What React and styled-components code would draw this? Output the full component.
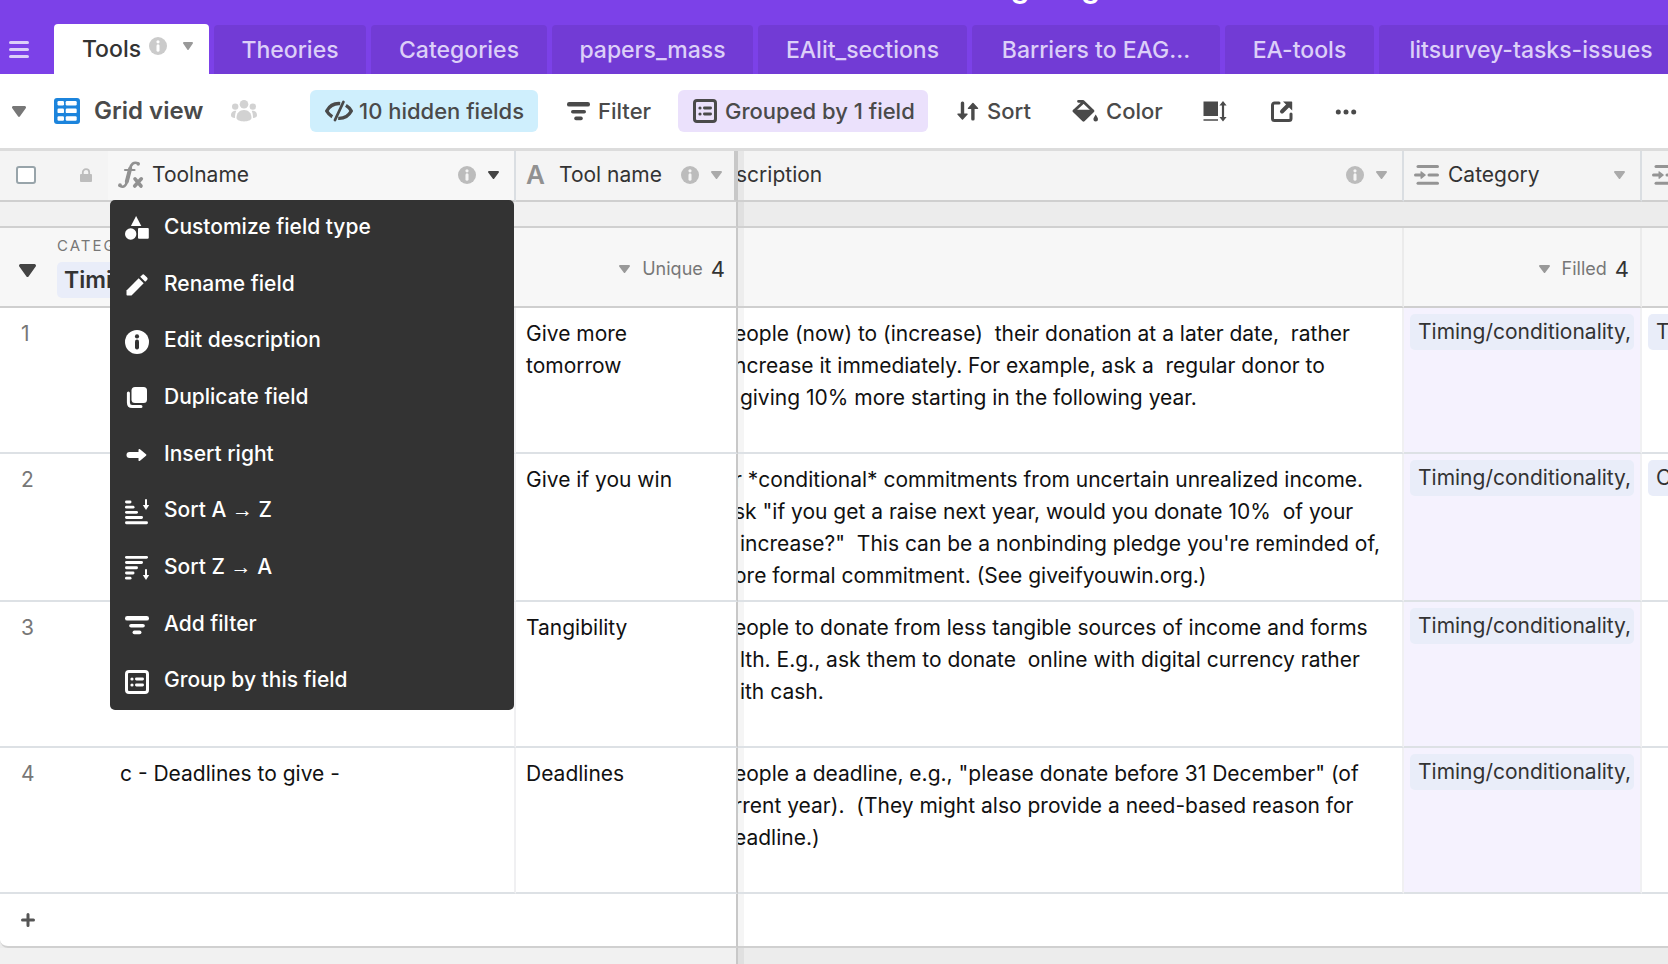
import React from "react";
import styled, { createGlobalStyle } from "styled-components";

const GlobalStyle = createGlobalStyle`
  *, *::before, *::after { box-sizing: border-box; }
  body {
    margin: 0;
    overflow: hidden;
    background: #ececec;
    color: #111;
    font-family: Inter, "Liberation Sans", sans-serif;
    font-size: 21px;
    line-height: 32px;
  }
  button {
    margin: 0;
    padding: 0;
    border: 0;
    background: none;
    color: inherit;
    font: inherit;
    cursor: pointer;
  }
`;

/* ---------- icons ---------- */

const Icon = styled.svg`
  display: block;
  flex: none;
  overflow: visible;
`;

const Caret = ({ w = 11, h = 8, color = "#aaa" }) => (
  <Icon width={w} height={h} viewBox="0 0 11 8" fill={color} preserveAspectRatio="none" aria-hidden="true">
    <path d="M1 0h9a1 1 0 0 1 .8 1.6L6.3 7.5a1 1 0 0 1-1.6 0L.2 1.6A1 1 0 0 1 1 0z" />
  </Icon>
);

const InfoIcon = ({ size = 18, color = "#bcbcbc", mark = "#f5f5f5" }) => (
  <Icon width={size} height={size} viewBox="0 0 24 24" aria-hidden="true">
    <circle cx="12" cy="12" r="12" fill={color} />
    <circle cx="12" cy="6.4" r="2.1" fill={mark} />
    <rect x="10" y="9.6" width="4" height="10" rx="2" fill={mark} />
  </Icon>
);

const HamburgerIcon = () => (
  <Icon width="20" height="17" viewBox="0 0 20 17" fill="#dccff9" aria-hidden="true">
    <rect width="20" height="3" rx="1.5" />
    <rect y="7" width="20" height="3" rx="1.5" />
    <rect y="14" width="20" height="3" rx="1.5" />
  </Icon>
);

const GridIcon = () => (
  <Icon width="26" height="26" viewBox="0 0 26 26" aria-hidden="true">
    <rect width="26" height="26" rx="3" fill="#1c84dc" />
    <g fill="#fff">
      <rect x="3.5" y="3" width="6.5" height="4.5" rx="1.2" />
      <rect x="11.7" y="3" width="11" height="4.5" rx="1.2" />
      <rect x="3.5" y="10.6" width="6.5" height="4.5" rx="1.2" />
      <rect x="11.7" y="10.6" width="11" height="4.5" rx="1.2" />
      <rect x="3.5" y="18.2" width="6.5" height="4.5" rx="1.2" />
      <rect x="11.7" y="18.2" width="11" height="4.5" rx="1.2" />
    </g>
  </Icon>
);

const PeopleIcon = () => (
  <Icon width="26" height="22" viewBox="0 0 26 22" fill="#d2d2d2" aria-hidden="true">
    <circle cx="13" cy="4.3" r="4.3" />
    <circle cx="4.2" cy="6.6" r="3.2" />
    <circle cx="21.8" cy="6.6" r="3.2" />
    <path d="M5.5 18c0-5 3-8 7.500-8s7.500 3 7.500 8c0 2-3.500 3.400-7.500 3.400S5.500 20 5.500 18z" />
    <path d="M0 15.500c0-3 1.500-4.700 5.300-4.700C4.500 12.500 4 15 4 18c-2.500-.2-4-1.100-4-2.500zM26 15.500c0-3-1.500-4.700-5.300-4.700.8 1.700 1.300 4.200 1.300 7.200 2.500-.2 4-1.100 4-2.500z" />
  </Icon>
);

const HiddenIcon = () => (
  <Icon width="28" height="20" viewBox="0 0 28 20" fill="none" stroke="#4a4a4a" strokeWidth="3.400" strokeLinejoin="round" aria-hidden="true">
    <path d="M15.200 2.600C9 2.200 4.200 5.400 1.700 10c1.300 2.300 3.100 4.300 5.600 5.700" />
    <path d="M13.200 17.400C19.300 17.700 23.800 14.600 26.300 10c-1.200-2.300-3-4.200-5.400-5.600" />
    <path d="M18.400 1 10 19" strokeWidth="2.800" strokeLinecap="round" />
  </Icon>
);

const FilterIcon = ({ w = 23, color = "#4a4a4a" }) => (
  <Icon width={w} height="19" viewBox="0 0 23 19" fill={color} preserveAspectRatio="none" aria-hidden="true">
    <rect width="23" height="4.600" rx="2.200" />
    <rect x="4" y="8" width="15" height="3.600" rx="1.800" />
    <rect x="7.200" y="14.600" width="8.600" height="3.600" rx="1.800" />
  </Icon>
);

const GroupIcon = ({ color = "#4a4a4a" }) => (
  <Icon width="24" height="24" viewBox="0 0 24 24" fill={color} aria-hidden="true">
    <rect x="1.500" y="1.500" width="21" height="21" rx="2.500" fill="none" stroke={color} strokeWidth="3" />
    <circle cx="7" cy="9" r="1.600" />
    <circle cx="7" cy="15" r="1.600" />
    <rect x="10" y="7.600" width="9" height="2.800" rx="1.400" />
    <rect x="10" y="13.600" width="9" height="2.800" rx="1.400" />
  </Icon>
);

const SortIcon = () => (
  <Icon width="22" height="20" viewBox="0 0 22 20" fill="#4a4a4a" aria-hidden="true">
    <rect x="3.800" y="0.500" width="3.400" height="15" rx="1.500" />
    <path d="M.8 12.500h9.400a.6.6 0 0 1 .4 1l-4.600 5a.8.800 0 0 1-1.100 0L.4 13.500a.6.6 0 0 1 .4-1z" />
    <rect x="14.200" y="4" width="3.400" height="15.500" rx="1.500" />
    <path d="M11.300 8h9.400a.6.6 0 0 0 .4-1l-4.600-5a.8.800 0 0 0-1.100 0l-4.500 5a.6.6 0 0 0 .4 1z" />
  </Icon>
);

const ColorIcon = () => (
  <Icon width="26" height="22" viewBox="0 0 26 22" aria-hidden="true">
    <path d="M6.500 1.300h4.400L21 11 11.500 20.200 1.900 11 10.500 3" fill="none" stroke="#4a4a4a" strokeWidth="2.800" strokeLinejoin="round" strokeLinecap="round" />
    <path d="M1.500 9.800h20L12.300 20.500a1 1 0 0 1-1.500 0z" fill="#4a4a4a" />
    <path d="M23.700 14.500c1.300 2.200 2.300 3.500 2.300 4.800a2.300 2.300 0 0 1-4.600 0c0-1.300 1-2.600 2.300-4.800z" fill="#4a4a4a" />
  </Icon>
);

const RowHeightIcon = () => (
  <Icon width="24" height="21" viewBox="0 0 24 21" aria-hidden="true">
    <rect x="0.500" y="0.500" width="14.500" height="14.500" fill="#4a4a4a" />
    <rect x="0.500" y="18" width="14.500" height="2" fill="#777" />
    <path d="M20 3v14" stroke="#4a4a4a" strokeWidth="2.200" />
    <path d="M20 0l3.600 4.600h-7.200zM20 20.500l3.600-4.600h-7.200z" fill="#4a4a4a" />
  </Icon>
);

const ShareIcon = () => (
  <Icon width="22" height="21" viewBox="0 0 22 21" aria-hidden="true">
    <path d="M8 2H3.500A2 2 0 0 0 1.500 4v13.500a2 2 0 0 0 2 2h14.500a2 2 0 0 0 2-2V13" fill="none" stroke="#4a4a4a" strokeWidth="3" strokeLinecap="round" />
    <path d="M11 10.500l6-6" stroke="#4a4a4a" strokeWidth="4" strokeLinecap="round" />
    <path d="M12 .5h8.500a.7.700 0 0 1 .7.700V9.500z" fill="#4a4a4a" />
  </Icon>
);

const DotsIcon = () => (
  <Icon width="22" height="6" viewBox="0 0 22 6" fill="#4a4a4a" aria-hidden="true">
    <circle cx="3.300" cy="4" r="2.500" />
    <circle cx="11" cy="4" r="2.500" />
    <circle cx="18.700" cy="4" r="2.500" />
  </Icon>
);

const LockIcon = () => (
  <Icon width="12" height="14" viewBox="0 0 12 14" aria-hidden="true">
    <rect y="6" width="12" height="8" rx="1" fill="#bdbdbd" />
    <path d="M2.800 6.500V4.300a3.200 3.200 0 0 1 6.400 0v2.200" fill="none" stroke="#bdbdbd" strokeWidth="1.800" />
  </Icon>
);

const FormulaIcon = () => (
  <Icon width="25" height="28" viewBox="0 0 25 28" fill="none" stroke="#919191" strokeLinecap="round" aria-hidden="true">
    <path d="M2 24.800c3.800 2.400 6-.3 7-4.300l3-12.500C13 3 15.500.6 20.400 2.400" strokeWidth="2.600" />
    <path d="M8.800 20.500l3.400-13" strokeWidth="4" />
    <circle cx="20.200" cy="3" r="1.700" fill="#919191" stroke="none" />
    <circle cx="2" cy="24.200" r="1.900" fill="#919191" stroke="none" />
    <path d="M7 9h9.500" strokeWidth="2.200" />
    <path d="M17 17.800l6 7.200M23.300 17.800l-6.600 7.200" strokeWidth="3.600" />
  </Icon>
);

const LookupIcon = () => (
  <Icon width="25" height="20" viewBox="0 0 25 20" fill="#949494" aria-hidden="true">
    <rect x="2.500" y="0" width="22.500" height="3" rx="1.500" />
    <rect x="2.500" y="16.800" width="22.500" height="3" rx="1.500" />
    <rect x="0" y="8.600" width="8" height="3" rx="1.500" />
    <path d="M6.500 6.600c.3-.4.700-.4 1-.2l4 3.200c.3.300.3.700 0 1l-4 3.200c-.3.200-.7.200-1-.2z" />
    <rect x="13.500" y="8.600" width="11.500" height="3" rx="1.500" />
  </Icon>
);

const ShapesIcon = () => (
  <Icon width="24" height="24" viewBox="0 0 24 24" fill="#fff" aria-hidden="true">
    <path d="M11.100 0 16.300 10H5.900z" />
    <circle cx="5.700" cy="18" r="5.700" />
    <rect x="13" y="12" width="10.800" height="10.800" rx="1" />
  </Icon>
);

const PencilIcon = () => (
  <Icon width="24" height="24" viewBox="0 0 24 24" fill="#fff" aria-hidden="true">
    <path d="M1.500 17.500 13.700 5.300l5 5L6.500 22.500H2.300a.8.800 0 0 1-.8-.8z" />
    <path d="M15.200 3.800l1.900-1.900a1.600 1.600 0 0 1 2.300 0l2.700 2.700a1.600 1.600 0 0 1 0 2.300l-1.900 1.900z" />
  </Icon>
);

const DuplicateIcon = () => (
  <Icon width="24" height="24" viewBox="0 0 24 24" fill="#fff" aria-hidden="true">
    <rect x="6.500" y="1" width="15.500" height="16" rx="3.500" />
    <path d="M3.400 7v9.500c0 2.300 1.200 4 3.800 4H16" fill="none" stroke="#fff" strokeWidth="3" strokeLinecap="round" />
  </Icon>
);

const ArrowIcon = () => (
  <Icon width="24" height="24" viewBox="0 0 24 24" fill="#fff" aria-hidden="true">
    <rect x="1.500" y="9" width="15" height="6" rx="3" />
    <path d="M13.500 6.800c0-.8.900-1.200 1.500-.6l6 5.100c.5.400.5 1 0 1.400l-6 5.100c-.6.600-1.500.2-1.500-.6z" />
  </Icon>
);

const SortAscIcon = ({ flip }) => (
  <Icon width="24" height="24" viewBox="0 0 24 24" fill="#fff" aria-hidden="true">
    {[6.500, 9.500, 13, 18, 23].map((w, i) => (
      <rect key={w} x="0" y={flip ? 20.700 - i * 5.200 : 0.500 + i * 5.200} width={w} height="2.900" rx="1.450" />
    ))}
    <g transform={flip ? "translate(0 14)" : undefined}>
      <rect x="20" y="-1" width="2" height="8" rx="1" />
      <path d="M17.800 5h6.400l-3.200 5z" />
    </g>
  </Icon>
);

/* ---------- layout ---------- */

const Page = styled.div`
  display: flex;
  flex-direction: column;
  min-height: 100vh;
  overflow: hidden;
`;

const TopBar = styled.header`
  background: #7c41e8;
`;

const BaseTitleClip = styled.div`
  display: flex;
  align-items: flex-end;
  height: 24px;
  overflow: hidden;
  padding-left: 60%;
`;

const BaseTitle = styled.h1`
  margin: 0;
  padding: 0 0 18px 10px;
  color: #fff;
  font-size: 30px;
  font-weight: 600;
  line-height: 40px;
`;

const TabBar = styled.nav`
  display: flex;
  align-items: flex-end;
  gap: 5px;
  height: 50px;
`;

const MenuToggle = styled.button`
  display: flex;
  align-items: center;
  flex: none;
  width: 49px;
  height: 50px;
  padding-left: 9px;
`;

const Tab = styled.button`
  display: flex;
  align-items: center;
  justify-content: center;
  flex: none;
  width: ${(p) => p.$width}px;
  height: ${(p) => (p.$active ? 50 : 49)}px;
  padding-left: ${(p) => (p.$active ? 12 : 0)}px;
  border-radius: 4px 4px 0 0;
  background: ${(p) => (p.$active ? "#fff" : "#723bd5")};
  color: ${(p) => (p.$active ? "#333" : "#dccff8")};
  font-size: 23px;
  font-weight: 500;
  white-space: nowrap;
`;

const TabBadges = styled.span`
  display: flex;
  align-items: center;
  gap: 16px;
  margin-left: 8px;
  padding-bottom: 6px;
`;

const Toolbar = styled.div`
  display: flex;
  align-items: center;
  height: 77px;
  padding: 0 12px;
  border-bottom: 3px solid #dcdcdc;
  background: #fff;
  color: #4a4a4a;
  font-size: 22px;
  font-weight: 500;
  white-space: nowrap;
`;

const ViewPicker = styled.button`
  display: flex;
  align-items: center;
  flex: none;
  gap: 14px;
  width: 298px;
  font-size: 24px;
  font-weight: 600;
`;

const CaretBox = styled.span`
  width: 28px;
`;

const Collaborators = styled.span`
  margin-left: 14px;
`;

const ToolButton = styled.button`
  display: flex;
  align-items: center;
  flex: none;
  gap: ${(p) => p.$gap || 8}px;
  width: ${(p) => p.$width}px;
  height: 42px;
  margin-right: ${(p) => p.$after || 0}px;
  padding-left: ${(p) => (p.$fill ? 15 : 0)}px;
  border-radius: 6px;
  background: ${(p) => p.$fill || "transparent"};
`;

const GridArea = styled.main`
  display: flex;
  flex-direction: column;
  flex: 1;
  overflow: hidden;
`;

const Table = styled.table`
  width: calc(100% + 212px);
  border-collapse: separate;
  border-spacing: 0;
  table-layout: fixed;
`;

const Col = styled.col`
  width: ${(p) => (p.$width ? `${p.$width}px` : "auto")};
`;

const HeadCell = styled.th`
  position: relative;
  padding: 0;
  border-right: ${(p) => (p.$frozen ? "4px solid #c8c8c8" : p.$open ? "0" : "2px solid #dadee2")};
  border-bottom: 2px solid #cfcfcf;
  background: ${(p) => (p.$primary ? "#f7f7f7" : "#f4f4f4")};
  box-shadow: ${(p) => (p.$shade ? "inset 6px 0 0 rgba(0, 0, 0, 0.05)" : "none")};
  color: #333;
  font-weight: 400;
  text-align: left;
`;

const HeadContent = styled.div`
  display: flex;
  align-items: center;
  gap: 9px;
  height: 49px;
  padding: 0 ${(p) => (p.$frozen ? 12 : 15)}px 2px ${(p) => (p.$left === undefined ? 10 : p.$left)}px;
  overflow: hidden;
  white-space: nowrap;
`;

const HeadActions = styled.span`
  display: flex;
  align-items: center;
  gap: 12px;
  margin-left: auto;
`;

const TextTypeMark = styled.span`
  width: 24px;
  color: #919191;
  font-size: 26px;
  font-weight: 600;
`;

const Checkbox = styled.input`
  appearance: none;
  flex: none;
  width: 20px;
  height: 18px;
  margin: 0 35px 0 0;
  border: 2px solid #98a4aa;
  border-radius: 3px;
  background: #fff;
`;

const Menu = styled.ul`
  position: absolute;
  z-index: 2;
  top: 100%;
  right: 0;
  left: 2px;
  display: flex;
  flex-direction: column;
  height: 510px;
  margin: 0;
  padding: 0;
  border-radius: 5px;
  background: #333;
  color: #fff;
  font-weight: 500;
  list-style: none;
`;

const MenuItem = styled.li`
  display: flex;
  flex: 1;
`;

const MenuButton = styled.button`
  display: flex;
  align-items: center;
  flex: 1;
  gap: 15px;
  padding: 0 15px 3px;
  text-align: left;

  svg {
    margin-top: 3px;
  }
`;

const LongArrow = styled.span`
  font-family: "Liberation Sans", sans-serif;
`;

const SpacerCell = styled.td`
  height: 26px;
  padding: 0;
  border-right: ${(p) => (p.$frozen ? "2px solid #c8c8c8" : "0")};
  border-bottom: 2px solid #d0d0d0;
  background: ${(p) => (p.$scrolled ? "#ececec" : "#f1f1f1")};
  box-shadow: ${(p) => (p.$scrolled ? "inset 6px 0 0 rgba(0, 0, 0, 0.05)" : "none")};
`;

const GroupCell = styled.td`
  height: 80px;
  padding: 0 11px 0 0;
  border-right: ${(p) => (p.$frozen ? "2px solid #c8c8c8" : p.$open ? "0" : "2px solid #ebebeb")};
  border-bottom: 2px solid #cfcfcf;
  background: #f7f7f7;
  box-shadow: ${(p) => (p.$shade ? "inset 6px 0 0 rgba(0, 0, 0, 0.04)" : "none")};
  white-space: nowrap;
`;

const GroupHead = styled.div`
  display: flex;
  align-items: center;
  gap: 21px;
  padding-left: 19px;

  svg {
    margin-top: 6px;
  }
`;

const GroupLabel = styled.div`
  color: #777;
  font-size: 15px;
  letter-spacing: 2px;
  line-height: 20px;
`;

const GroupValue = styled.div`
  width: 300px;
  height: 36px;
  margin-top: 6px;
  padding: 0 7px;
  border-radius: 5px;
  background: #e9edf9;
  color: #333;
  font-size: 23px;
  font-weight: 600;
  line-height: 36px;
`;

const Summary = styled.button`
  display: flex;
  align-items: center;
  gap: 8px;
  margin-left: auto;
  padding-top: 4px;
  color: #333;
  font-size: 22px;

  svg {
    margin-right: 4px;
  }
`;

const SummaryLabel = styled.span`
  color: #777;
  font-size: 18px;
`;

const DataRow = styled.tr`
  height: 146px;
`;

const Cell = styled.td`
  padding: ${(p) => (p.$chip ? "6px" : "10px 10px 8px")};
  padding-left: ${(p) => (p.$shade ? 0 : p.$chip ? 6 : p.$number ? 21 : p.$primary ? 12 : 10)}px;
  border-right: ${(p) => (p.$frozen ? "2px solid #c8c8c8" : p.$number ? "0" : "2px solid #f0f0f2")};
  border-bottom: 2px solid #dde1e5;
  background: ${(p) => (p.$tint ? "#f5f2fe" : "#fff")};
  box-shadow: ${(p) => (p.$shade ? "inset 6px 0 0 rgba(0, 0, 0, 0.04)" : "none")};
  color: ${(p) => (p.$number ? "#777" : "#111")};
  overflow: hidden;
  vertical-align: top;
`;

const ScrolledLine = styled.div`
  margin-left: -4px;
  white-space: pre;
`;

const ScrolledTitle = styled.span`
  margin-left: -2px;
  white-space: pre;
`;

const Chip = styled.div`
  height: 36px;
  padding-left: 8px;
  border-radius: 5px;
  background: #e9edf9;
  color: #333;
  line-height: 36px;
  overflow: hidden;
  white-space: nowrap;
`;

const AddCell = styled.td`
  height: 54px;
  padding: 0 0 0 21px;
  border-right: ${(p) => (p.$frozen ? "2px solid #c8c8c8" : "0")};
  border-bottom: 2px solid #d0d0d0;
  border-bottom-left-radius: ${(p) => (p.$corner ? 8 : 0)}px;
  background: #fff;
  box-shadow: ${(p) => (p.$shade ? "inset 6px 0 0 rgba(0, 0, 0, 0.04)" : "none")};
`;

const AddRow = styled.tr`
  background: #f1f1f1;
`;

const Below = styled.div`
  display: flex;
  flex: 1;
`;

const BelowFrozen = styled.div`
  width: 738px;
  border-right: 2px solid #c8c8c8;
  background: #f1f1f1;
`;

const BelowRest = styled.div`
  flex: 1;
  background: #ececec;
  box-shadow: inset 6px 0 0 rgba(0, 0, 0, 0.05);
`;

/* ---------- data ---------- */

const tabs = [
  { name: "Theories", width: 152 },
  { name: "Categories", width: 176 },
  { name: "papers_mass", width: 201 },
  { name: "EAlit_sections", width: 209 },
  { name: "Barriers to EAG...", width: 248 },
  { name: "EA-tools", width: 149 },
  { name: "litsurvey-tasks-issues", width: 304 },
];

const menuItems = [
  { id: "type", label: "Customize field type", icon: <ShapesIcon /> },
  { id: "rename", label: "Rename field", icon: <PencilIcon /> },
  { id: "describe", label: "Edit description", icon: <InfoIcon size={24} color="#fff" mark="#333" /> },
  { id: "duplicate", label: "Duplicate field", icon: <DuplicateIcon /> },
  { id: "insert", label: "Insert right", icon: <ArrowIcon /> },
  { id: "asc", label: <span>Sort A <LongArrow>→</LongArrow> Z</span>, icon: <SortAscIcon /> },
  { id: "desc", label: <span>Sort Z <LongArrow>→</LongArrow> A</span>, icon: <SortAscIcon flip /> },
  { id: "filter", label: "Add filter", icon: <FilterIcon w={24} color="#fff" /> },
  { id: "group", label: "Group by this field", icon: <GroupIcon color="#fff" /> },
];

const rows = [
  {
    primary: "",
    name: "Give more tomorrow",
    lines: [
      "eople (now) to (increase)  their donation at a later date,  rather",
      "ncrease it immediately. For example, ask a  regular donor to",
      " giving 10% more starting in the following year.",
    ],
    next: "T",
  },
  {
    primary: "",
    name: "Give if you win",
    lines: [
      "r *conditional* commitments from uncertain unrealized income.",
      "sk \"if you get a raise next year, would you donate 10%  of your",
      " increase?\"  This can be a nonbinding pledge you're reminded of,",
      "ore formal commitment. (See giveifyouwin.org.)",
    ],
    next: "C",
  },
  {
    primary: "",
    name: "Tangibility",
    lines: [
      "eople to donate from less tangible sources of income and forms",
      " lth. E.g., ask them to donate  online with digital currency rather",
      " ith cash.",
    ],
  },
  {
    primary: "c - Deadlines to give -",
    name: "Deadlines",
    lines: [
      "eople a deadline, e.g., \"please donate before 31 December\" (of",
      "rrent year).  (They might also provide a need-based reason for",
      "eadline.)",
    ],
  },
];

export default function App() {
  return (
    <Page>
      <GlobalStyle />
      <TopBar>
        <BaseTitleClip>
          <BaseTitle>giving</BaseTitle>
        </BaseTitleClip>
        <TabBar>
          <MenuToggle aria-label="All tables">
            <HamburgerIcon />
          </MenuToggle>
          <Tab $width={155} $active>
            Tools
            <TabBadges>
              <InfoIcon color="#cbcbcb" mark="#fff" />
              <Caret w={10} h={8} color="#999" />
            </TabBadges>
          </Tab>
          {tabs.map((t) => (
            <Tab key={t.name} $width={t.width}>
              {t.name}
            </Tab>
          ))}
        </TabBar>
      </TopBar>

      <Toolbar>
        <ViewPicker>
          <CaretBox>
            <Caret w={14} h={11} color="#777" />
          </CaretBox>
          <GridIcon />
          Grid view
          <Collaborators>
            <PeopleIcon />
          </Collaborators>
        </ViewPicker>
        <ToolButton $width={228} $after={29} $fill="#cfeffd" $gap={6}>
          <HiddenIcon />
          10 hidden fields
        </ToolButton>
        <ToolButton $width={86} $after={25}>
          <FilterIcon />
          Filter
        </ToolButton>
        <ToolButton $width={250} $after={29} $fill="#ebe1fc">
          <GroupIcon />
          Grouped by 1 field
        </ToolButton>
        <ToolButton $width={76} $after={39}>
          <SortIcon />
          Sort
        </ToolButton>
        <ToolButton $width={92} $after={39}>
          <ColorIcon />
          Color
        </ToolButton>
        <ToolButton $width={24} $after={44} aria-label="Row height">
          <RowHeightIcon />
        </ToolButton>
        <ToolButton $width={22} $after={42} aria-label="Share view">
          <ShareIcon />
        </ToolButton>
        <ToolButton $width={22} aria-label="More">
          <DotsIcon />
        </ToolButton>
      </Toolbar>

      <GridArea>
        <Table>
          <colgroup>
            <Col $width={108} />
            <Col $width={408} />
            <Col $width={222} />
            <Col />
            <Col $width={238} />
            <Col $width={238} />
          </colgroup>
          <thead>
            <tr>
              <HeadCell $open>
                <HeadContent $left={16}>
                  <Checkbox type="checkbox" aria-label="Select all records" />
                  <LockIcon />
                </HeadContent>
              </HeadCell>
              <HeadCell $primary>
                <HeadContent>
                  <FormulaIcon />
                  Toolname
                  <HeadActions>
                    <InfoIcon />
                    <Caret color="#444" />
                  </HeadActions>
                </HeadContent>
                <Menu>
                  {menuItems.map((m) => (
                    <MenuItem key={m.id}>
                      <MenuButton>
                        {m.icon}
                        {m.label}
                      </MenuButton>
                    </MenuItem>
                  ))}
                </Menu>
              </HeadCell>
              <HeadCell $frozen>
                <HeadContent $frozen>
                  <TextTypeMark aria-hidden="true">A</TextTypeMark>
                  Tool name
                  <HeadActions>
                    <InfoIcon />
                    <Caret />
                  </HeadActions>
                </HeadContent>
              </HeadCell>
              <HeadCell $shade>
                <HeadContent $left={0}>
                  <ScrolledTitle>scription</ScrolledTitle>
                  <HeadActions>
                    <InfoIcon />
                    <Caret />
                  </HeadActions>
                </HeadContent>
              </HeadCell>
              <HeadCell>
                <HeadContent>
                  <LookupIcon />
                  Category
                  <HeadActions>
                    <Caret />
                  </HeadActions>
                </HeadContent>
              </HeadCell>
              <HeadCell>
                <HeadContent>
                  <LookupIcon />
                </HeadContent>
              </HeadCell>
            </tr>
          </thead>
          <tbody>
            <tr aria-hidden="true">
              <SpacerCell colSpan={2} />
              <SpacerCell $frozen />
              <SpacerCell $scrolled colSpan={3} />
            </tr>
            <tr>
              <GroupCell colSpan={2} $open>
                <GroupHead>
                  <Caret w={17} h={13} color="#444" />
                  <div>
                    <GroupLabel>CATEGORY</GroupLabel>
                    <GroupValue>Timing/conditionality,</GroupValue>
                  </div>
                </GroupHead>
              </GroupCell>
              <GroupCell $frozen>
                <Summary>
                  <Caret color="#999" />
                  <SummaryLabel>Unique</SummaryLabel>4
                </Summary>
              </GroupCell>
              <GroupCell $shade />
              <GroupCell>
                <Summary>
                  <Caret color="#999" />
                  <SummaryLabel>Filled</SummaryLabel>4
                </Summary>
              </GroupCell>
              <GroupCell />
            </tr>
            {rows.map((r, i) => (
              <DataRow key={r.name}>
                <Cell $number>{i + 1}</Cell>
                <Cell $primary>{r.primary}</Cell>
                <Cell $frozen>{r.name}</Cell>
                <Cell $shade>
                  {r.lines.map((line) => (
                    <ScrolledLine key={line}>{line}</ScrolledLine>
                  ))}
                </Cell>
                <Cell $chip $tint>
                  <Chip>Timing/conditionality,</Chip>
                </Cell>
                <Cell $chip>{r.next && <Chip>{r.next}</Chip>}</Cell>
              </DataRow>
            ))}
            <AddRow>
              <AddCell colSpan={2} $corner>
                <button aria-label="Add record">
                  <Icon width="14" height="14" viewBox="0 0 14 14" aria-hidden="true">
                    <path d="M7 1.500v11M1.500 7h11" stroke="#555" strokeWidth="3" strokeLinecap="round" />
                  </Icon>
                </button>
              </AddCell>
              <AddCell $frozen />
              <AddCell $shade />
              <AddCell colSpan={2} />
            </AddRow>
          </tbody>
        </Table>
        <Below>
          <BelowFrozen />
          <BelowRest />
        </Below>
      </GridArea>
    </Page>
  );
}
